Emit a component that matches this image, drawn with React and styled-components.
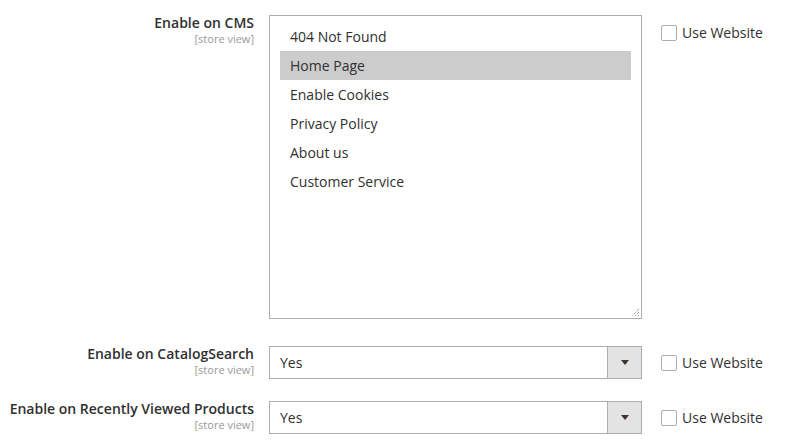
import React from 'react'
import styled, { createGlobalStyle } from 'styled-components'

const GlobalStyle = createGlobalStyle`
  body {
    margin: 0;
    background: #fff;
    font-family: "Open Sans", "Liberation Sans", sans-serif;
    color: #303030;
  }
`

const Page = styled.div`
  padding-top: 15px;
`

const Row = styled.div`
  display: grid;
  grid-template-columns: 254px 373px auto;
  column-gap: 15px;
  margin-bottom: ${({ gap }) => gap}px;
  align-items: start;
`

const Label = styled.div`
  margin-top: -1px;
  text-align: right;
  font-size: 14px;
  font-weight: 600;
  line-height: 18px;
  color: #303030;

  small {
    display: block;
    font-size: 11px;
    font-weight: 400;
    line-height: 14px;
    color: #999;
  }
`

const ListBox = styled.div`
  position: relative;
  box-sizing: border-box;
  height: 304px;
  border: 1px solid #adadad;
  padding: 6px 10px;
`

const Option = styled.div`
  height: 29px;
  line-height: 29px;
  padding-left: 10px;
  font-size: 14px;
  color: #303030;
  background: ${({ selected }) => (selected ? '#cccccc' : 'transparent')};
`

const Grip = styled.svg`
  position: absolute;
  right: 1px;
  bottom: 1px;
`

const Select = styled.div`
  box-sizing: border-box;
  height: 33px;
  border: 1px solid #adadad;
  display: flex;
  align-items: stretch;
  font-size: 14px;
`

const SelectValue = styled.div`
  flex: 1;
  padding-left: 10px;
  line-height: 31px;
`

const ArrowBox = styled.div`
  width: 33px;
  border-left: 1px solid #adadad;
  background: #e3e3e3;
  display: flex;
  align-items: center;
  justify-content: center;

  &::after {
    content: '';
    border-left: 4px solid transparent;
    border-right: 4px solid transparent;
    border-top: 5px solid #41362f;
  }
`

const UseWebsite = styled.label`
  display: flex;
  align-items: center;
  gap: 5px;
  margin-left: 4px;
  padding-top: ${({ top }) => top}px;
  font-size: 14px;
  line-height: 16px;
  color: #303030;
`

const Box = styled.span`
  box-sizing: border-box;
  width: 16px;
  height: 16px;
  border: 1px solid #adadad;
  border-radius: 2px;
  background: #fff;
`

const pages = ['404 Not Found', 'Home Page', 'Enable Cookies', 'Privacy Policy', 'About us', 'Customer Service']

const Check = ({ top }) => (
  <UseWebsite top={top}>
    <Box />
    Use Website
  </UseWebsite>
)

const SelectRow = ({ label, gap }) => (
  <Row gap={gap}>
    <Label>
      {label}
      <small>[store view]</small>
    </Label>
    <Select>
      <SelectValue>Yes</SelectValue>
      <ArrowBox />
    </Select>
    <Check top={9} />
  </Row>
)

const App = () => (
  <Page>
    <GlobalStyle />
    <Row gap={27}>
      <Label>
        Enable on CMS
        <small>[store view]</small>
      </Label>
      <ListBox>
        {pages.map(p => (
          <Option key={p} selected={p === 'Home Page'}>
            {p}
          </Option>
        ))}
        <Grip width="10" height="10" viewBox="0 0 10 10">
          <path d="M9 2 L2 9 M9 5 L5 9 M9 8 L8 9" stroke="#777" strokeWidth="1" strokeDasharray="1 1" fill="none" />
        </Grip>
      </ListBox>
      <Check top={10} />
    </Row>
    <SelectRow label="Enable on CatalogSearch" gap={22} />
    <SelectRow label="Enable on Recently Viewed Products" gap={0} />
  </Page>
)

export default App
